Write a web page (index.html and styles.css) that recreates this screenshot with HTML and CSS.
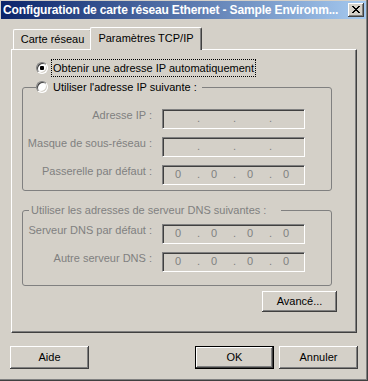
FILE: index.html
```html
<!DOCTYPE html>
<html lang="fr">
<head>
<meta charset="utf-8">
<title>Configuration de carte réseau Ethernet</title>
<link rel="stylesheet" href="styles.css">
</head>
<body>
<div class="window">
  <div class="titlebar">
    <span class="title">Configuration de carte réseau Ethernet - Sample Environm...</span>
    <span class="close"><svg width="8" height="7" viewBox="0 0 8 7"><path d="M0 0h2v1H0z M6 0h2v1H6z M1 1h2v1H1z M5 1h2v1H5z M2 2h4v1H2z M3 3h2v1H3z M2 4h4v1H2z M1 5h2v1H1z M5 5h2v1H5z M0 6h2v1H0z M6 6h2v1H6z" fill="#000"/></svg></span>
  </div>
  <div class="main">
    <div class="tabs">
      <div class="tab">Carte réseau</div>
      <div class="tab tab-active">Paramètres TCP/IP</div>
    </div>
    <div class="panel">
      <div class="radio-row first">
        <span class="radio on"></span>
        <span class="rlabel focus">Obtenir une adresse IP automatiquement</span>
      </div>
      <fieldset class="group group-ip">
        <legend class="legend-radio">
          <span class="radio"></span>
          <span class="rlabel">Utiliser l'adresse IP suivante :</span>
        </legend>
        <div class="field first">
          <span class="lbl">Adresse IP :</span>
          <div class="ip"><span></span><span class="dot">.</span><span></span><span class="dot">.</span><span></span><span class="dot">.</span><span></span></div>
        </div>
        <div class="field">
          <span class="lbl">Masque de sous-réseau :</span>
          <div class="ip"><span></span><span class="dot">.</span><span></span><span class="dot">.</span><span></span><span class="dot">.</span><span></span></div>
        </div>
        <div class="field">
          <span class="lbl">Passerelle par défaut :</span>
          <div class="ip"><span>0</span><span class="dot">.</span><span>0</span><span class="dot">.</span><span>0</span><span class="dot">.</span><span>0</span></div>
        </div>
      </fieldset>
      <fieldset class="group group-dns">
        <legend class="legend-text">Utiliser les adresses de serveur DNS suivantes :</legend>
        <div class="field first">
          <span class="lbl">Serveur DNS par défaut :</span>
          <div class="ip"><span>0</span><span class="dot">.</span><span>0</span><span class="dot">.</span><span>0</span><span class="dot">.</span><span>0</span></div>
        </div>
        <div class="field">
          <span class="lbl">Autre serveur DNS :</span>
          <div class="ip"><span>0</span><span class="dot">.</span><span>0</span><span class="dot">.</span><span>0</span><span class="dot">.</span><span>0</span></div>
        </div>
      </fieldset>
      <div class="adv-row">
        <button class="btn btn-adv">Avancé...</button>
      </div>
    </div>
  </div>
  <div class="buttons">
    <button class="btn">Aide</button>
    <span class="spacer"></span>
    <button class="btn btn-default">OK</button>
    <button class="btn">Annuler</button>
  </div>
</div>
</body>
</html>
```
FILE: styles.css
```css
html, body {
  margin: 0;
  padding: 0;
  background: #d4d0c8;
}
body {
  font-family: "Liberation Sans", Arial, sans-serif;
  font-size: 11px;
  line-height: 13px;
  color: #000;
}
.window {
  width: 368px;
  height: 381px;
  box-sizing: border-box;
  padding: 1px 2px 2px 1px;
  background: #d4d0c8;
  box-shadow: inset -1px -1px #404040, inset -2px -2px #808080;
}
.titlebar {
  height: 18px;
  display: flex;
  align-items: center;
  padding-left: 2px;
  background: linear-gradient(to right, #0a246a, #a6caf0);
  color: #fff;
  font-weight: bold;
  font-size: 12px;
  letter-spacing: -0.15px;
}
.title {
  flex: 1;
  white-space: nowrap;
  overflow: hidden;
}
.close {
  width: 16px;
  height: 14px;
  margin-right: 2px;
  box-sizing: border-box;
  background: #d4d0c8;
  box-shadow: inset -1px -1px #404040, inset 1px 1px #fff, inset -2px -2px #808080;
  display: flex;
  align-items: center;
  justify-content: center;
}
.close svg {
  display: block;
  margin-top: -1px;
}
.main {
  padding: 8px 9px 0 10px;
}
.tabs {
  display: flex;
  align-items: flex-end;
  height: 22px;
  padding-left: 2px;
  position: relative;
  z-index: 1;
}
.tab {
  box-sizing: border-box;
  width: 79px;
  height: 20px;
  padding-top: 3px;
  text-align: center;
  border-top: 1px solid #fff;
  border-left: 1px solid #fff;
  border-right: 1px solid #404040;
  border-radius: 2px 2px 0 0;
  box-shadow: inset -1px 0 #808080;
  background: #d4d0c8;
}
.tab-active {
  width: 112px;
  height: 23px;
  margin-left: -2px;
  margin-bottom: -1px;
  padding-top: 4px;
}
.panel {
  box-sizing: border-box;
  height: 284px;
  border-top: 1px solid #fff;
  border-left: 1px solid #fff;
  border-right: 1px solid #404040;
  border-bottom: 1px solid #404040;
  box-shadow: inset -1px -1px #808080;
}
.radio-row {
  display: flex;
  align-items: center;
  height: 18px;
  margin: 9px 0 0 24px;
}
.radio {
  width: 12px;
  height: 12px;
  flex: none;
  box-sizing: border-box;
  border-radius: 50%;
  background: #fff;
  border: 1px solid;
  border-color: #808080 #fff #fff #808080;
  box-shadow: inset 1px 1px #404040, inset -1px -1px #d4d0c8;
  display: flex;
  align-items: center;
  justify-content: center;
}
.radio.on::after {
  content: "";
  width: 4px;
  height: 4px;
  border-radius: 1px;
  background: #000;
}
.rlabel {
  margin-left: 3px;
  padding: 1px 1px;
  line-height: 14px;
  border: 1px dotted transparent;
  white-space: nowrap;
}
.rlabel.focus {
  border-color: #000;
}
.group {
  box-sizing: border-box;
  width: 310px;
  margin: 0 0 0 10px;
  padding: 0;
  border: 1px solid #808080;
  border-radius: 3px;
  min-width: 0;
}
.group-ip {
  margin-top: 1px;
  padding-bottom: 5px;
}
.group-dns {
  margin-top: 13px;
  padding-bottom: 13px;
}
.legend-radio {
  display: flex;
  align-items: center;
  height: 18px;
  margin-left: 13px;
  padding: 0 3px 0 0;
}
.legend-text {
  margin-left: 6px;
  padding: 0 15px 0 2px;
  color: #808080;
  line-height: 13px;
}
.field {
  display: flex;
  height: 20px;
  margin-top: 8px;
}
.group-ip .field.first {
  margin-top: 13px;
}
.group-dns .field.first {
  margin-top: 7px;
}
.lbl {
  width: 129px;
  flex: none;
  text-align: right;
  color: #808080;
  white-space: nowrap;
}
.ip {
  box-sizing: border-box;
  width: 143px;
  height: 20px;
  margin-left: 10px;
  padding: 2px 0 0 1px;
  border: 1px solid;
  border-color: #808080 #fff #fff #808080;
  box-shadow: inset 1px 1px #404040, inset -1px -1px #d4d0c8;
  display: grid;
  grid-template-columns: 28px 8px 28px 8px 28px 8px 28px;
  color: #808080;
  text-align: center;
}
.ip .dot {
  text-align: right;
}
.adv-row {
  display: flex;
  justify-content: flex-end;
  margin-top: 5px;
  padding-right: 19px;
}
.btn {
  box-sizing: border-box;
  width: 79px;
  height: 23px;
  margin: 0;
  padding: 0;
  border: none;
  background: #d4d0c8;
  font: inherit;
  color: #000;
  box-shadow: inset -1px -1px #404040, inset 1px 1px #fff, inset -2px -2px #808080;
}
.btn-adv {
  width: 75px;
  height: 21px;
}
.btn-default {
  box-shadow: inset 0 0 0 1px #000, inset -2px -2px #404040, inset 2px 2px #fff, inset -3px -3px #808080;
}
.buttons {
  display: flex;
  gap: 5px;
  margin-top: 13px;
  padding: 0 8px 0 9px;
}
.spacer {
  flex: 1;
}
```
